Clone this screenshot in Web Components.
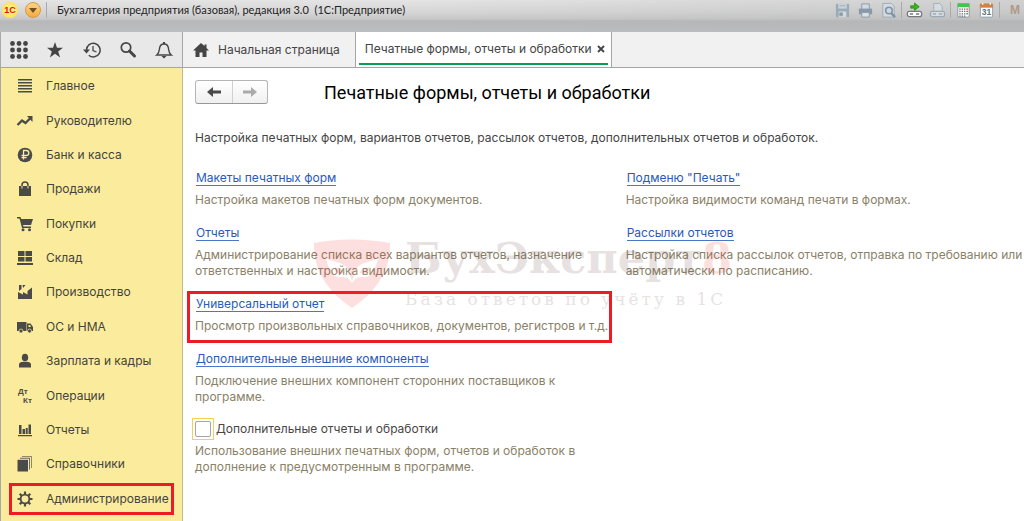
<!DOCTYPE html>
<html lang="ru">
<head>
<meta charset="utf-8">
<title>Бухгалтерия предприятия</title>
<style>
body{margin:0;font:12px/16px Inter,"Liberation Sans",Arial,sans-serif;color:#444;background:#fff}
</style>
</head>
<body>
<app-window></app-window>
<script>
function define(name, html, setup){
  customElements.define(name, class extends HTMLElement{
    connectedCallback(){
      if(this.shadowRoot) return;
      const t=document.createElement('template');
      t.innerHTML=html;
      this.attachShadow({mode:'open'}).append(t.content.cloneNode(true));
      if(setup) setup(this,this.shadowRoot);
    }
  });
}

const ICONS={
 grid:'<g><circle cx="2.5" cy="2.5" r="2.4"/><circle cx="9" cy="2.5" r="2.4"/><circle cx="15.500" cy="2.500" r="2.400"/><circle cx="2.500" cy="9" r="2.400"/><circle cx="9" cy="9" r="2.400"/><circle cx="15.500" cy="9" r="2.400"/><circle cx="2.500" cy="15.500" r="2.400"/><circle cx="9" cy="15.500" r="2.400"/><circle cx="15.500" cy="15.500" r="2.400"/></g>',
 star:'<path d="M9 1l2 5.800h6l-4.800 3.700 1.900 6L9 12.800l-5.100 3.700 1.900-6L1 6.800h6z"/>',
 clock:'<path d="M3.500 9a6.800 6.800 0 1 1 2.300 5.200" fill="none" stroke="currentColor" stroke-width="1.500"/><path d="M0 8.500h7L3.500 12.500z"/><path d="M10 5v4.500l3.500 1.500" fill="none" stroke="currentColor" stroke-width="1.300"/>',
 search:'<circle cx="7" cy="6.500" r="4.700" fill="none" stroke="currentColor" stroke-width="1.700"/><path d="M10.500 10l5 5" stroke="currentColor" stroke-width="3" stroke-linecap="round"/>',
 bell:'<path d="M1.800 14h14.400c-2.500-2-2.400-3.500-2.700-6.500C13.200 4.500 11.500 3 9 3S4.800 4.500 4.500 7.500C4.200 10.500 4.300 12 1.800 14z" fill="none" stroke="currentColor" stroke-width="1.400"/><path d="M8 1h2v2H8zM6.500 15h5L9 17.500z"/>',
 home:'<path d="M9 2L1 9.500h2.500V16h4v-4.500h3V16h4V9.500H17L14.500 7V3.500h-2V5z"/>',
 list:'<path d="M2 2h14v1.500H2zM2 5h14v1.500H2zM2 8h14v1.500H2zM2 11h14v1.500H2zM2 14h14v1.500H2z"/>',
 trend:'<path d="M1.500 13L6 8.500l3.500 2.500L15 5.500" fill="none" stroke="currentColor" stroke-width="2.300"/><path d="M11 4h5.500v6z"/>',
 ruble:'<circle cx="9" cy="9" r="7.300"/><path d="M7.500 13.500v-9h2.800a2.400 2.400 0 0 1 0 5H5.500M5.500 11.700h5" fill="none" stroke="#fbec9d" stroke-width="1.300"/>',
 bag:'<path d="M3 6h12v10H3z"/><path d="M6 8V5a3 3 0 0 1 6 0v3" fill="none" stroke="currentColor" stroke-width="1.500"/><path d="M6 6v2.500M12 6v2.500" stroke="#fbec9d"/>',
 cart:'<path d="M1 2h3.500l.7 2H17l-2 6H7l.5 1.500H15V13H6L3.500 3.500H1z"/><circle cx="7" cy="14.800" r="1.500"/><circle cx="13.500" cy="14.800" r="1.500"/>',
 store:'<path d="M2 2h6.500v5H2zM9.500 2H16v5H9.500zM2 8h6.500v4.500H2zM9.500 8H16v4.500H9.500zM1 14h16v2H1z"/>',
 factory:'<path d="M2 16V9l5 2.500V9l4.500 2.500V8L16 4.500V16z"/><path d="M3 2h2.500v4L3 8zM6.500 2h3L7 5z"/>',
 truck:'<path d="M1 4h9.500v9H1zM11 5.500h3.500L17 9v4h-6z"/><path d="M12.500 7H14l1 2h-2.500z" fill="#fbec9d"/><circle cx="5" cy="13" r="2" stroke="#fbec9d" stroke-width=".7"/><circle cx="13.500" cy="13" r="2" stroke="#fbec9d" stroke-width=".7"/>',
 person:'<ellipse cx="9" cy="5.500" rx="3.200" ry="3.800"/><path d="M3 15.500v-3c0-2 3-2.700 4.500-2.700h3c1.500 0 4.500.7 4.500 2.700v3z"/>',
 dtkt:'<text x="2" y="7" font-size="8" font-weight="bold">Дт</text><text x="7" y="16" font-size="8" font-weight="bold">Кт</text>',
 bars:'<path d="M2 14h14v1.300H2zM3 4h2.500v9H3zM6.500 8H9v5H6.500zM9.700 7h2v6h-2zM12.500 3.500H15V13h-2.500z"/>',
 books:'<path d="M6 1h10v12h-1V2H6z" opacity=".6"/><path d="M4 2.800h10v11.700h-1V3.800H4z" opacity=".8"/><path d="M1.500 4.800h10.500V16.500H1.500z"/>',
 gear:'<circle cx="9" cy="9" r="4.400" fill="none" stroke="currentColor" stroke-width="1.900"/><path d="M9 1.500v3M9 13.500v3M1.500 9h3M13.500 9h3M3.700 3.700l2 2M12.300 12.300l2 2M14.300 3.700l-2 2M5.700 12.300l-2 2" stroke="currentColor" stroke-width="2.200"/>',
 left:'<path d="M2 9l6-5v3.600h8v2.800H8V14z"/>',
 right:'<path d="M16 9l-6-5v3.600H2v2.800h8V14z"/>',
 save:'<path d="M2 2h14v14H2z" fill="#9cabb9"/><path d="M4.500 2h9v5h-9z" fill="#cbd2d7"/><path d="M5 10h8v6H5z" fill="#d6d9dc"/><path d="M6 4h6M6 11.500h3v3H6z" fill="#8d9cab" stroke="#8d9cab" stroke-width=".7"/>',
 print:'<path d="M5 2h8v6H5z" fill="#d5dade" stroke="#8899a9"/><path d="M2 7h14v6H2z" fill="#8799aa"/><path d="M5 11h8v5H5z" fill="#dce0e3" stroke="#8899a9"/>',
 preview:'<path d="M3 1.500h9l3 3V16H3z" fill="#d7dbdf" stroke="#9babb8"/><circle cx="9.500" cy="9" r="3.500" fill="#cbd8e1" stroke="#7f94a7" stroke-width="1.700"/><path d="M12 12l4 4" stroke="#7f94a7" stroke-width="2.500"/>',
 linkgo:'<path d="M5 4h4V1l5 4-5 4V6.500H5z" fill="#35bb13" stroke="#168400" stroke-width=".7"/><rect x="1.500" y="10" width="15" height="5.500" rx="2" fill="#fff" stroke="#737a7f" stroke-width="1.400"/><path d="M4 12.700h3.500M10.500 12.700H14" stroke="#737a7f" stroke-width="1.500"/>',
 linkdoc:'<path d="M5 9V1.500h6l3 3V9" fill="#d6dbe0" stroke="#9eafbe"/><rect x="1.500" y="10" width="15" height="5.500" rx="2" fill="#d9dce0" stroke="#9baab6" stroke-width="1.400"/><path d="M4 12.700h3.500M10.500 12.700H14" stroke="#9baab6" stroke-width="1.500"/>',
 calc:'<path d="M3 2h12v14H3z" fill="#fff" stroke="#8b969d"/><path d="M3 1.500h12v4H3z" fill="#41c64c"/><path d="M4.500 7.500h6.500M4.500 10h6.500M4.500 12.500h6.500M4.500 15h6.500" stroke="#647078" stroke-width="1.400" stroke-dasharray="1.500 1"/><path d="M12 7.500h1.800M12 10h1.800" stroke="#ed4545" stroke-width="1.400"/><path d="M12 12.500h1.800" stroke="#647078" stroke-width="1.400"/>',
 cal:'<rect x="2.500" y="2" width="13" height="14" rx="1" fill="#fff" stroke="#8ca0ad"/><path d="M2 2h14v4H2z" fill="#cc8248"/><path d="M5 1v2M13 1v2" stroke="#fff" stroke-width="1.300"/><text x="4" y="14" font-size="9" font-weight="bold" fill="#62747f">31</text>'
};

customElements.define('ui-icon', class extends HTMLElement{
  connectedCallback(){
    if(this.shadowRoot) return;
    this.attachShadow({mode:'open'}).innerHTML=
    `<style>:host{display:block;width:18px;height:18px;flex:none}svg{display:block;width:100%;height:100%;font-family:"Liberation Sans",Arial,sans-serif}</style>
     <svg viewBox="0 0 18 18" fill="currentColor" aria-hidden="true">${ICONS[this.getAttribute('name')]}</svg>`;
  }
});

define('title-bar',`<style>
:host{display:block;height:32px;box-sizing:border-box;background:linear-gradient(90deg,#b7b8ba00 0 40%,#b3b4b666),linear-gradient(#e4e4e4 0,#d6d6d6 12px,#c8c8c8 19px,#b7b8ba 21px,#bcbdbe);overflow:hidden}
.row{display:flex;align-items:center;height:20px}
.logo,.drop{box-sizing:border-box;width:16px;height:16px;border-radius:50%;flex:none}
.logo{margin-left:2px;background:radial-gradient(#fff5a0,#ffdc3c);font:bold 9px/16px "Liberation Sans",sans-serif;color:#dd1414;text-align:center}
.drop{margin:0 5px 0 7px;padding:0;border:1px solid #d79a3c;background:linear-gradient(#fbd48b,#f4ac42);display:grid;place-items:center}
.drop svg{width:8px;height:5px}
.sep{width:1px;height:16px;background:#aaa}
.name{font:11px/16px Lato,"Liberation Sans",sans-serif;color:#222;margin-left:10px;flex:1;white-space:pre}
.tools{display:flex;align-items:center;gap:6px;margin-right:4px}
.tools .sep{margin:0 -2px}
.tools ui-icon{width:17px;height:17px}
.m{font:bold 12px/16px "Liberation Sans",sans-serif;color:#b09a88;width:10px;margin-left:6px}
</style>
<div class="row"><span class="logo">1С</span>
<button class="drop" aria-label="Меню"><svg viewBox="0 0 8 5"><path d="M0 0h8L4 5z" fill="#75501e"/></svg></button>
<span class="sep"></span>
<span class="name">Бухгалтерия предприятия (базовая), редакция 3.0  (1С:Предприятие)</span>
<div class="tools"><ui-icon name="save"></ui-icon><ui-icon name="print"></ui-icon><ui-icon name="preview"></ui-icon><i class="sep"></i><ui-icon name="linkgo"></ui-icon><ui-icon name="linkdoc"></ui-icon><i class="sep"></i><ui-icon name="calc"></ui-icon><ui-icon name="cal"></ui-icon><i class="sep"></i><span class="m">M</span></div></div>`);

define('tool-strip',`<style>
:host{display:flex;align-items:center;justify-content:space-between;padding:0 9px;background:#e8e8e8;color:#454545;border-right:1px solid #a5a5a5}
button{display:block;border:0;background:none;padding:0;color:inherit}
</style>
<button aria-label="Разделы"><ui-icon name="grid"></ui-icon></button><button aria-label="Избранное"><ui-icon name="star"></ui-icon></button><button aria-label="История"><ui-icon name="clock"></ui-icon></button><button aria-label="Поиск"><ui-icon name="search"></ui-icon></button><button aria-label="Оповещения"><ui-icon name="bell"></ui-icon></button>`);

define('tab-strip',`<style>
:host{display:flex;background:#f1f1f1}
.tab{display:flex;align-items:center;box-sizing:border-box;border-right:1px solid #a5a5a5}
a{color:#444;text-decoration:none;white-space:nowrap}
.home{padding:0 15px 0 9px;gap:8px}
.home ui-icon{color:#454545}
.active{background:#fff;padding:0 3px 2px}
.in{display:flex;align-items:center;gap:4px;height:100%;box-sizing:border-box;padding:2px 2px 0 6px;border-bottom:2px solid #0b9e52}
button{border:0;padding:0;background:none;width:10px;height:16px;display:grid;place-items:center}
svg{width:8px;height:8px;display:block}
</style>
<div class="tab home"><ui-icon name="home"></ui-icon><a href="#">Начальная страница</a></div>
<div class="tab active"><div class="in"><a href="#">Печатные формы, отчеты и обработки</a><button aria-label="Закрыть"><svg viewBox="0 0 8 8"><path d="M1 1l6 6M7 1L1 7" stroke="#444" stroke-width="1.800"/></svg></button></div></div>`);

define('nav-item',`<style>
:host{display:flex;align-items:center;position:relative;min-height:32px}
a{display:flex;align-items:center;gap:12px;padding-left:15px;color:#44443c;text-decoration:none;white-space:nowrap}
ui-icon{color:#4a4a48}
:host([marked])::after{content:"";position:absolute;inset:1px 8px 1px 8px;border:3px solid #ed1c24}
</style><a href="#"><ui-icon></ui-icon><slot></slot></a>`,(h,r)=>{
  const icon=document.createElement('ui-icon');icon.setAttribute('name',h.getAttribute('icon'));
  r.querySelector('ui-icon').replaceWith(icon);
});

define('side-nav',`<style>
:host{display:grid;grid-auto-rows:1fr;padding:1px 0 5px;background:#fbec9d;border-right:1px solid #c5b984}
</style>
<nav-item icon="list">Главное</nav-item><nav-item icon="trend">Руководителю</nav-item><nav-item icon="ruble">Банк и касса</nav-item><nav-item icon="bag">Продажи</nav-item><nav-item icon="cart">Покупки</nav-item><nav-item icon="store">Склад</nav-item><nav-item icon="factory">Производство</nav-item><nav-item icon="truck">ОС и НМА</nav-item><nav-item icon="person">Зарплата и кадры</nav-item><nav-item icon="dtkt">Операции</nav-item><nav-item icon="bars">Отчеты</nav-item><nav-item icon="books">Справочники</nav-item><nav-item icon="gear" marked>Администрирование</nav-item>`);

define('setting-block',`<style>
:host{display:block;position:relative}
a{color:#2a5ab8;text-decoration:none;border-bottom:1px solid #4a77c8;line-height:14px;display:inline-block;margin-left:1px}
.head{height:16px;display:flex;align-items:flex-start}
p{margin:5px 0 0;color:#8a8168;white-space:nowrap}
:host([marked])::after{content:"";position:absolute;inset:-6px -4px -9px -8px;border:3px solid #ed1c24}
</style><div class="head"><a href="#"></a></div><p><slot></slot></p>`,(h,r)=>{r.querySelector('a').textContent=h.getAttribute('label')});

define('check-block',`<style>
:host{display:block}
.head{display:flex;align-items:center;gap:2px;margin:-6px 0 0 -3px;height:24px;color:#4a4545}
.focus{display:grid;place-items:center;box-sizing:border-box;width:22px;height:22px;border:1px solid #f5cf52}
input{appearance:none;box-sizing:border-box;margin:0;width:16px;height:16px;border:1px solid #a5a5a5;border-radius:2px;background:#fff}
p{margin:2px 0 0;color:#8a8168;white-space:nowrap}
</style><div class="head"><span class="focus"><input type="checkbox" id="c"></span><label for="c"></label></div><p><slot></slot></p>`,(h,r)=>{r.querySelector('label').textContent=h.getAttribute('label')});

define('water-mark',`<style>
:host{display:flex;gap:14px;pointer-events:none;color:#64413b;opacity:.15}
svg{width:78px;height:70px;flex:none}
b{display:block;font:bold 43px/46px "DejaVu Serif",serif;white-space:nowrap;margin-top:-4px}
b i{font-style:normal;color:#ee3a2e}
small{display:block;font:17px/20px "DejaVu Serif",serif;letter-spacing:3px;white-space:nowrap;margin-top:8px}
</style><svg viewBox="0 0 78 70"><path d="M1 4Q38-3 77 4Q78 43 39 69Q0 43 1 4z" fill="#ef3028"/><path fill-rule="evenodd" d="M13 19c8 5 16 3 22 11l4 12 4-12c6-8 14-6 22-11-1 7-3 10-6 12 0 6-5 8-10 7-5 0-7 2-10 6-3-4-5-6-10-6-5 1-10-1-10-7-3-2-5-5-6-12zM22 28c-1 6 4 8 9 6 0-3-4-5-9-6zM56 28c1 6-4 8-9 6 0-3 4-5 9-6z" fill="#fff"/></svg><div><b>БухЭксперт<i>8</i></b><small>База ответов по учёту в 1С</small></div>`);

define('settings-page',`<style>
:host{display:block;position:relative;padding:12px 0 20px 12px;background:#fff;overflow:hidden}
header{display:flex;align-items:center;gap:56px;height:24px}
.nav{display:flex;border:1px solid #b5b5b5;border-bottom-color:#979797;border-radius:3px;background:linear-gradient(#fff,#f0f0f0)}
.nav button{width:36px;height:22px;padding:0;border:0;background:none;display:grid;place-items:center;color:#4a4a4a}
.nav button+button{border-left:1px solid #d0d0d0;width:35px;color:#aaa}
h1{margin:2px 0 0;font:18px/22px Roboto,"Liberation Sans",sans-serif;color:#000;white-space:nowrap}
.intro{margin:26px 0 0;white-space:nowrap}
.cols{display:grid;grid-template-columns:51fr 49fr;gap:16px;margin-top:25px}
.col{display:flex;flex-direction:column;align-items:flex-start;gap:18px}
water-mark{position:absolute;left:130px;top:171px}
</style>
<header><div class="nav"><button aria-label="Назад"><ui-icon name="left"></ui-icon></button><button aria-label="Вперед"><ui-icon name="right"></ui-icon></button></div><h1>Печатные формы, отчеты и обработки</h1></header>
<p class="intro">Настройка печатных форм, вариантов отчетов, рассылок отчетов, дополнительных отчетов и обработок.</p>
<div class="cols"><div class="col">
<setting-block label="Макеты печатных форм">Настройка макетов печатных форм документов.</setting-block>
<setting-block label="Отчеты">Администрирование списка всех вариантов отчетов, назначение<br>ответственных и настройка видимости.</setting-block>
<setting-block marked label="Универсальный отчет">Просмотр произвольных справочников, документов, регистров и т.д.</setting-block>
<setting-block label="Дополнительные внешние компоненты">Подключение внешних компонент сторонних поставщиков к<br>программе.</setting-block>
<check-block label="Дополнительные отчеты и обработки">Использование внешних печатных форм, отчетов и обработок в<br>дополнение к предусмотренным в программе.</check-block>
</div><div class="col">
<setting-block label='Подменю "Печать"'>Настройка видимости команд печати в формах.</setting-block>
<setting-block label="Рассылки отчетов">Настройка списка рассылок отчетов, отправка по требованию или<br>автоматически по расписанию.</setting-block>
</div></div>
<water-mark></water-mark>`);

define('app-window',`<style>
:host{display:grid;grid-template:32px 36px 1fr / 182px 1fr;min-height:100vh;box-sizing:border-box;border-left:1px solid #a9a9a9}
title-bar{grid-column:1/3;margin-left:-1px}
tool-strip,tab-strip{border-bottom:1px solid #a5a5a5}
</style><title-bar></title-bar><tool-strip></tool-strip><tab-strip></tab-strip><side-nav></side-nav><settings-page></settings-page>`);
</script>
</body>
</html>
